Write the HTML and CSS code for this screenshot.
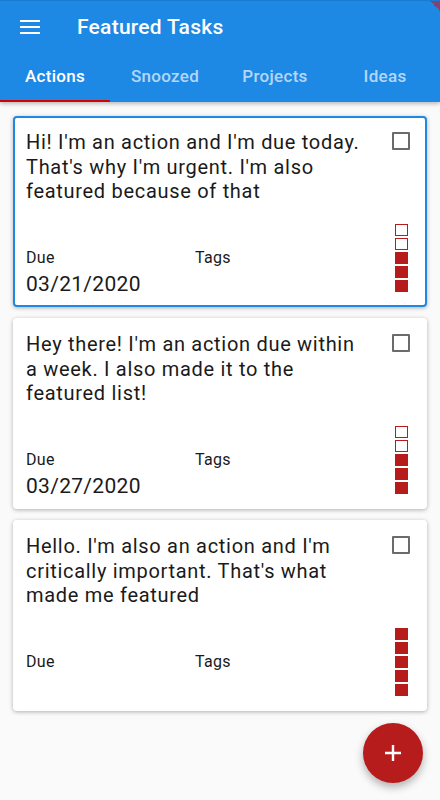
FILE: index.html
```html
<!DOCTYPE html>
<html lang="en">
<head>
  <meta charset="UTF-8">
  <meta name="viewport" content="width=device-width, initial-scale=1.0">
  <title>Featured Tasks</title>
  <link rel="stylesheet" href="styles.css">
</head>
<body>
  <div class="app">
    <header class="appbar">
      <div class="toolbar">
        <button class="menu-btn" aria-label="Menu">
          <svg width="20" height="14" viewBox="0 0 20 14"><path d="M0 1h20M0 7h20M0 13h20" stroke="#fff" stroke-width="2"/></svg>
        </button>
        <h1 class="title">Featured Tasks</h1>
      </div>
      <nav class="tabs">
        <div class="tab active">Actions</div>
        <div class="tab">Snoozed</div>
        <div class="tab">Projects</div>
        <div class="tab">Ideas</div>
      </nav>
      <div class="debug-corner"></div>
    </header>

    <main class="list">
      <div class="card selected">
        <div class="card-main">
          <p class="card-text">Hi! I'm an action and I'm due today. That's why I'm urgent. I'm also featured because of that</p>
          <div class="meta">
            <div class="meta-col">
              <span class="meta-label">Due</span>
              <span class="meta-value">03/21/2020</span>
            </div>
            <div class="meta-col">
              <span class="meta-label">Tags</span>
            </div>
          </div>
        </div>
        <div class="card-side">
          <span class="checkbox"></span>
          <div class="priority">
            <span class="sq"></span><span class="sq"></span><span class="sq on"></span><span class="sq on"></span><span class="sq on"></span>
          </div>
        </div>
      </div>

      <div class="card">
        <div class="card-main">
          <p class="card-text">Hey there! I'm an action due within a week. I also made it to the featured list!</p>
          <div class="meta">
            <div class="meta-col">
              <span class="meta-label">Due</span>
              <span class="meta-value">03/27/2020</span>
            </div>
            <div class="meta-col">
              <span class="meta-label">Tags</span>
            </div>
          </div>
        </div>
        <div class="card-side">
          <span class="checkbox"></span>
          <div class="priority">
            <span class="sq"></span><span class="sq"></span><span class="sq on"></span><span class="sq on"></span><span class="sq on"></span>
          </div>
        </div>
      </div>

      <div class="card">
        <div class="card-main">
          <p class="card-text">Hello. I'm also an action and I'm critically important. That's what made me featured</p>
          <div class="meta">
            <div class="meta-col">
              <span class="meta-label">Due</span>
              <span class="meta-value"></span>
            </div>
            <div class="meta-col">
              <span class="meta-label">Tags</span>
            </div>
          </div>
        </div>
        <div class="card-side">
          <span class="checkbox"></span>
          <div class="priority">
            <span class="sq on"></span><span class="sq on"></span><span class="sq on"></span><span class="sq on"></span><span class="sq on"></span>
          </div>
        </div>
      </div>
    </main>

    <button class="fab" aria-label="Add">
      <svg width="20" height="20" viewBox="0 0 20 20"><path d="M10 2v16M2 10h16" stroke="#fff" stroke-width="2.4"/></svg>
    </button>
  </div>
</body>
</html>
```

FILE: styles.css
```css
* {
    box-sizing: border-box;
}
body {
    margin: 0;
    font-family: Roboto, "Noto Sans", sans-serif;
    background: #fafafa;
    color: #1a1a1a;
}
.app {
    position: relative;
    width: 440px;
    height: 800px;
    overflow: hidden;
}
.appbar {
    position: relative;
    background: #1e88e5;
    color: #fff;
    box-shadow: 0 2px 4px rgba(0, 0, 0, 0.25);
    border-top: 1px solid #1a7ad0;
}
.toolbar {
    display: flex;
    align-items: center;
    height: 51px;
}
.menu-btn {
    display: flex;
    align-items: center;
    justify-content: center;
    width: 60px;
    height: 51px;
    padding: 0;
    border: none;
    background: none;
}
.title {
    margin: 0 0 0 17px;
    font-size: 21px;
    font-weight: 500;
    letter-spacing: 0.25px;
}
.tabs {
    display: grid;
    grid-template-columns: repeat(4, 1fr);
    height: 50px;
}
.tab {
    display: flex;
    align-items: center;
    justify-content: center;
    font-size: 17px;
    font-weight: 500;
    letter-spacing: 0.3px;
    color: rgba(255, 255, 255, 0.68);
    border-bottom: 2px solid transparent;
}
.tab.active {
    color: #fff;
    border-bottom-color: #d50000;
}
.debug-corner {
    position: absolute;
    top: 0;
    right: 0;
    width: 10px;
    height: 10px;
    background: linear-gradient(225deg, rgba(142, 58, 99, 0.85) 50%, transparent 50%);
}
.list {
    display: flex;
    flex-direction: column;
    gap: 11px;
    padding: 14px 13px;
}
.card {
    display: flex;
    height: 191px;
    padding: 12px 15px 6px 11px;
    background: #fff;
    border: 2px solid transparent;
    border-radius: 4px;
    box-shadow: 0 1px 4px rgba(0, 0, 0, 0.3);
}
.card.selected {
    border-color: #1e88e5;
}
.card-main {
    flex: 1;
    display: flex;
    flex-direction: column;
    justify-content: space-between;
}
.card-text {
    margin: 0;
    font-size: 20px;
    line-height: 24.5px;
    padding-right: 25px;
    letter-spacing: 0.7px;
}
.meta {
    display: flex;
}
.meta-col {
    display: flex;
    flex-direction: column;
    width: 169px;
}
.meta-label {
    font-size: 16px;
    line-height: 22px;
    letter-spacing: 0.3px;
}
.meta-value {
    font-size: 21px;
    line-height: 30px;
    height: 30px;
    letter-spacing: 0.3px;
}
.card-side {
    display: flex;
    flex-direction: column;
    justify-content: space-between;
    align-items: center;
    width: 18px;
}
.checkbox {
    width: 18px;
    height: 18px;
    margin-top: 2px;
    border: 2px solid #6b6b6b;
    border-radius: 1px;
}
.priority {
    display: flex;
    flex-direction: column;
    gap: 1.5px;
    margin-bottom: 7px;
}
.sq {
    width: 13px;
    height: 12.5px;
    border: 1.5px solid #b71c1c;
    background: #fff;
}
.sq.on {
    background: #b71c1c;
}
.fab {
    position: absolute;
    right: 17px;
    bottom: 17px;
    display: flex;
    align-items: center;
    justify-content: center;
    width: 60px;
    height: 60px;
    padding: 0;
    border: none;
    border-radius: 50%;
    background: #b71c1c;
    box-shadow: 0 4px 8px rgba(0, 0, 0, 0.3);
}
```
